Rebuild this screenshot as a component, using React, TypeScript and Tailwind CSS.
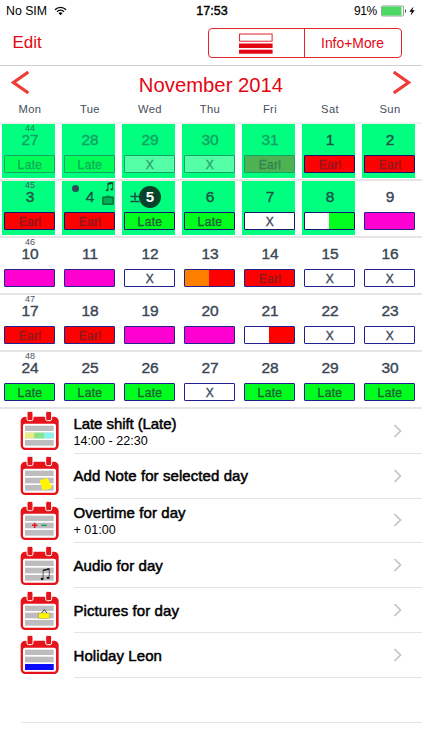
import React from "react";

type Shift = "late" | "earl" | "x" | "holiday" | "xLate" | "xEarl" | "orangeEarl";

interface Day {
  n: number;
  shift: Shift;
  week?: number;
  green?: boolean;
  faded?: boolean;
  selected?: boolean;
  notes?: boolean;
}

const g = true;
const weeks: Day[][] = [
  [
    { n: 27, shift: "late", week: 44, green: g, faded: true },
    { n: 28, shift: "late", green: g, faded: true },
    { n: 29, shift: "x", green: g, faded: true },
    { n: 30, shift: "x", green: g, faded: true },
    { n: 31, shift: "earl", green: g, faded: true },
    { n: 1, shift: "earl", green: g },
    { n: 2, shift: "earl", green: g },
  ],
  [
    { n: 3, shift: "earl", week: 45, green: g },
    { n: 4, shift: "earl", green: g, notes: true },
    { n: 5, shift: "late", green: g, selected: true },
    { n: 6, shift: "late", green: g },
    { n: 7, shift: "x", green: g },
    { n: 8, shift: "xLate", green: g },
    { n: 9, shift: "holiday" },
  ],
  [
    { n: 10, shift: "holiday", week: 46 },
    { n: 11, shift: "holiday" },
    { n: 12, shift: "x" },
    { n: 13, shift: "orangeEarl" },
    { n: 14, shift: "earl" },
    { n: 15, shift: "x" },
    { n: 16, shift: "x" },
  ],
  [
    { n: 17, shift: "earl", week: 47 },
    { n: 18, shift: "earl" },
    { n: 19, shift: "holiday" },
    { n: 20, shift: "holiday" },
    { n: 21, shift: "xEarl" },
    { n: 22, shift: "x" },
    { n: 23, shift: "x" },
  ],
  [
    { n: 24, shift: "late", week: 48 },
    { n: 25, shift: "late" },
    { n: 26, shift: "late" },
    { n: 27, shift: "x" },
    { n: 28, shift: "late" },
    { n: 29, shift: "late" },
    { n: 30, shift: "late" },
  ],
];

const fills: Record<Shift, string> = {
  late: "bg-[#00ff1e] text-[#1c6136]",
  earl: "bg-[#ff0000] text-[#8c1a1e]",
  x: "bg-white text-[#3c4654]",
  holiday: "bg-[#ff00d0]",
  xLate: "bg-linear-to-r from-white from-48% to-[#00ff1e] to-48%",
  xEarl: "bg-linear-to-r from-white from-48% to-[#ff0000] to-48%",
  orangeEarl: "bg-linear-to-r from-[#ff8000] from-48% to-[#ff0000] to-48%",
};

const fadedFills: Partial<Record<Shift, string>> = {
  late: "bg-[#00ff58] text-[#0fae5a]",
  earl: "bg-[#4db252] text-[#398050]",
  x: "bg-[#55ffa8] text-[#27a66b]",
};

const labels: Partial<Record<Shift, string>> = { late: "Late", earl: "Earl", x: "X" };

function MusicNotes({ className }: { className: string }) {
  return (
    <svg viewBox="0 0 28 36" className={className}>
      <path d="M8 31V5L26 1V27" fill="none" stroke="currentColor" strokeWidth="3.500" />
      <path d="M8 4L26 0V7L8 11Z" fill="currentColor" />
      <ellipse cx="5" cy="31" rx="5" ry="4" fill="currentColor" />
      <ellipse cx="22.5" cy="28" rx="5" ry="4" fill="currentColor" />
    </svg>
  );
}

function DayCell({ day }: { day: Day }) {
  const bar = day.faded
    ? `${fadedFills[day.shift]} border-[#12a466]`
    : `${fills[day.shift]} ${day.green ? "border-[#14146e]" : "border-[#22208c]"}`;
  return (
    <div
      className={`relative ml-[2px] mr-[5px] flex h-[54px] w-[53px] flex-col pl-[2px] ${day.green ? "bg-[#00ff7f]" : ""}`}
    >
      <div
        className={`h-2 pl-px text-center text-[9px] leading-[9px] ${day.faded ? "text-[#1c7c50]" : "text-[#4a5462]"}`}
      >
        {day.week}
      </div>
      <div
        className={`h-[23px] pl-px text-center text-[15.5px] leading-[16px] [-webkit-text-stroke:0.4px] ${day.faded ? "text-[#12a263]" : day.green ? "text-[#1f5348]" : "text-[#3c4654]"}`}
      >
        {day.selected ? "" : day.n}
      </div>
      <div
        className={`h-[18px] w-[51px] rounded-[1px] border pt-[2px] pl-px text-center text-[12px] leading-[14px] tracking-[0.35px] [-webkit-text-stroke:0.35px] ${bar}`}
      >
        {labels[day.shift]}
      </div>
      {day.notes && (
        <>
          <span className="absolute top-[4px] left-[10px] size-[6.5px] rounded-full bg-[#304a59]" />
          <MusicNotes className="absolute top-[1px] left-[42.500px] h-[9.500px] w-[9px] text-[#0c4a30]" />
          <svg viewBox="0 0 34 32" className="absolute top-[13px] left-[40px] h-[11px] w-[12px]">
            <path d="M11 9L17 3L23 9" fill="none" stroke="#0a6a3c" strokeWidth="2" />
            <rect x="2" y="9" width="30" height="21" rx="2" fill="#00ac54" stroke="#064c28" strokeWidth="3" />
          </svg>
        </>
      )}
      {day.selected && (
        <>
          <svg viewBox="0 0 10 11" className="absolute top-[10.5px] left-[8px] h-[11px] w-[10px]">
            <path d="M0.5 4.5H9.5M5 0.5V8.2M0.5 9.5H9.5" fill="none" stroke="#1f5348" strokeWidth="1.6" />
          </svg>
          <span className="absolute top-[5px] left-[17px] flex size-[22px] items-center justify-center rounded-full bg-[#05442a] text-[15px] leading-[22px] font-bold text-white">
            {day.n}
          </span>
        </>
      )}
    </div>
  );
}

type Art = "shift" | "note" | "overtime" | "audio" | "picture" | "holiday";

function CalendarIcon({ art }: { art: Art }) {
  return (
    <svg viewBox="0 0 120 120" className="h-[40px] w-[40px] shrink-0">
      <rect x="2" y="17" width="114" height="100" rx="14" fill="#e5141a" />
      <rect x="9" y="38" width="99" height="72" rx="6" fill="#fff" />
      <g fill="#e5141a" stroke="#fff" strokeWidth="3">
        <rect x="21" y="1" width="18" height="28" rx="5" />
        <rect x="77" y="1" width="18" height="28" rx="5" />
      </g>
      <g fill="#bdbdc0">
        <rect x="15" y="44" width="86" height="16" />
        <rect x="15" y="65" width="86" height="17" />
        <rect x="15" y="87" width="86" height="17" />
      </g>
      {art === "shift" && (
        <>
          <rect x="15" y="65" width="29" height="17" fill="#e9ea80" />
          <rect x="43" y="65" width="29" height="17" fill="#85e38b" />
          <rect x="72" y="65" width="29" height="17" fill="#8af0ee" />
        </>
      )}
      {art === "note" && <path d="M59 73L82 66L96 91L90 99L67 102Z" fill="#fff500" />}
      {art === "overtime" && (
        <>
          <path d="M36 73H52M44 65V81" stroke="#e5141a" strokeWidth="4.5" />
          <path d="M64 73H80" stroke="#159c58" strokeWidth="4.5" />
        </>
      )}
      {art === "audio" && (
        <svg x="61" y="66" width="29" height="37" viewBox="0 0 28 36">
          <path d="M8 31V6L26 2V27" fill="none" stroke="#111" strokeWidth="1.8" />
          <path d="M8 5L26 1V5L8 9Z" fill="#111" />
          <ellipse cx="5" cy="32" rx="4.5" ry="3.4" fill="#111" />
          <ellipse cx="22.5" cy="29" rx="4.5" ry="3.4" fill="#111" />
        </svg>
      )}
      {art === "picture" && (
        <>
          <path d="M64 67L73 56L82 67" fill="none" stroke="#222" strokeWidth="2.5" />
          <rect x="56" y="66" width="32" height="16" fill="#fff500" stroke="#8a8a3a" strokeWidth="1.2" />
        </>
      )}
      {art === "holiday" && <rect x="15" y="87" width="86" height="18" fill="#0a0aff" />}
    </svg>
  );
}

const items: { title: string; sub?: string; art: Art }[] = [
  { title: "Late shift (Late)", sub: "14:00 - 22:30", art: "shift" },
  { title: "Add Note for selected day", art: "note" },
  { title: "Overtime for day", sub: "+ 01:00", art: "overtime" },
  { title: "Audio for day", art: "audio" },
  { title: "Pictures for day", art: "picture" },
  { title: "Holiday Leon", art: "holiday" },
];

function StatusBar() {
  return (
    <div className="grid h-[22px] grid-cols-3 items-center pl-[6px] text-[12.3px] leading-[20px] text-black">
      <div className="flex items-center">
        <span>No SIM</span>
        <svg viewBox="0 0 39 30" className="ml-[6.5px] h-[10px] w-[13px]">
          <path d="M3 11C12 1.500 27 1.500 36 11" fill="none" stroke="#000" strokeWidth="4" />
          <path d="M9 17C15 11 24 11 30 17" fill="none" stroke="#000" strokeWidth="4" />
          <path d="M13.500 21C17 18 22 18 25.500 21L19.500 28Z" fill="#000" />
        </svg>
      </div>
      <div className="pr-[4px] text-center text-[12.500px] [-webkit-text-stroke:0.4px]">17:53</div>
      <div className="flex items-center justify-end pr-[4px]">
        <span className="text-[12px] tracking-[-0.3px]">91%</span>
        <svg viewBox="0 0 37 12" className="ml-[4px] h-[12px] w-[37px]">
          <rect x="0.5" y="1" width="22" height="10" rx="1" fill="#fff" stroke="#777" strokeWidth="0.7" />
          <rect x="1" y="1.500" width="19.500" height="9" fill="#4cd964" />
          <path d="M24 4C25.300 4.500 25.300 7.500 24 8Z" fill="#333" />
          <path d="M32.500 1.500L28.300 6.700H30.700L29.700 10.500L33.700 5.300H31.300Z" fill="#000" />
        </svg>
      </div>
    </div>
  );
}

export default function App() {
  return (
    <div className="flex h-[750px] w-[422px] flex-col overflow-hidden bg-white font-['Liberation_Sans',Arial,sans-serif]">
      <StatusBar />
      <header className="flex h-[44px] items-start justify-between border-b border-[#cfcfcf] pt-[6px] pr-[20.500px] pl-[12.500px] text-[#e30613]">
        <span className="text-[17px] leading-[30px]">Edit</span>
        <div className="flex h-[30px] w-[194px] rounded-[4px] border border-[#e0262d]">
          <div className="flex w-[96px] items-center justify-center border-r border-[#e0262d]">
            <svg viewBox="0 0 34 21" className="h-[21px] w-[34px]">
              <rect x="0.6" y="1" width="32.500" height="7.200" fill="#fff" stroke="#e30613" strokeWidth="0.9" />
              <rect x="0" y="10.500" width="33.600" height="4.500" fill="#e30613" />
              <rect x="0" y="16.700" width="33.600" height="4" fill="#e30613" />
            </svg>
          </div>
          <span className="flex-1 text-center text-[13.900px] leading-[29px]">Info+More</span>
        </div>
      </header>

      <div className="flex h-[34px] items-center justify-between pr-[11px] pl-[11px] text-[#e30613]">
        <svg viewBox="0 0 18 24" className="h-[24px] w-[18px]">
          <path d="M17.300 1L2.500 11.500L17.300 22" fill="none" stroke="#ee3d36" strokeWidth="3.100" />
        </svg>
        <h1 className="pt-[4px] text-[20.300px] leading-[26px]">November 2014</h1>
        <svg viewBox="0 0 18 24" className="h-[24px] w-[18px]">
          <path d="M0.700 1L15.500 11.500L0.700 22" fill="none" stroke="#ee3d36" strokeWidth="3.100" />
        </svg>
      </div>
      <div className="grid h-[22px] w-[420px] grid-cols-7 pt-px text-center text-[11.200px] leading-[16px] tracking-[0.35px] text-[#454e5c]">
        {["Mon", "Tue", "Wed", "Thu", "Fri", "Sat", "Sun"].map((d) => (
          <span key={d}>{d}</span>
        ))}
      </div>

      <div className="border-b-2 border-[#e6e6e6]">
        {weeks.map((week, i) => (
          <div key={i} className={`flex h-[57px] border-t-2 ${i === 0 ? "border-[#f1f1f1]" : "border-[#e6e6e6]"}`}>
            {week.map((day) => (
              <DayCell key={day.n} day={day} />
            ))}
          </div>
        ))}
      </div>

      <ul className="flex flex-col">
        {items.map((it) => (
          <li key={it.title} className="flex h-[44.800px] items-center pl-[20px]">
            <CalendarIcon art={it.art} />
            <div className="ml-[13.500px] flex h-full flex-1 items-center justify-between border-b border-[#e4e4e6] pr-[20px] text-black">
              <div className="flex flex-col pt-[1.500px]">
                <span
                  className={`text-[15px] leading-[18px] [-webkit-text-stroke:0.5px] ${it.art === "shift" ? "tracking-[-0.08px]" : "tracking-[0.08px]"}`}
                >
                  {it.title}
                </span>
                {it.sub && <span className="text-[12.600px] leading-[16px]">{it.sub}</span>}
              </div>
              <svg viewBox="0 0 9 14" className="h-[14px] w-[9px]">
                <path d="M1.500 1L7.500 7L1.500 13" fill="none" stroke="#c4c4c8" strokeWidth="1.700" />
              </svg>
            </div>
          </li>
        ))}
        <li className="ml-[20.500px] h-[44.800px] border-b border-[#e4e4e6]" />
      </ul>
    </div>
  );
}
